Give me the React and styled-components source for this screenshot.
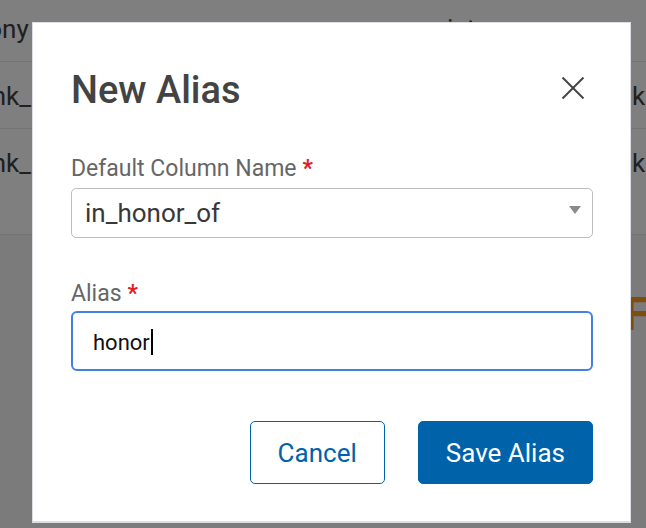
import React from "react";
import styled, { createGlobalStyle } from "styled-components";

const GlobalStyle = createGlobalStyle`
  html, body, #root { margin: 0; padding: 0; height: 100%; }
  body { font-family: Roboto, "Liberation Sans", Arial, sans-serif; overflow: hidden; }
  * { box-sizing: border-box; }
`;

const Page = styled.div`
  position: relative;
  width: 646px;
  height: 528px;
  overflow: hidden;
  background: #ffffff;
`;

const Table = styled.div`
  margin-left: -21px;
  width: 667px;
`;

const Row = styled.div`
  display: grid;
  grid-template-columns: 468px 185px 1fr;
  height: ${(p) => p.$h}px;
  padding-top: ${(p) => p.$pad}px;
  border-bottom: 1px solid #e8e8e8;
  font-size: 26px;
  color: #404040;
  white-space: nowrap;
`;

const Cell = styled.div`
  overflow: hidden;
`;

const Lower = styled.div`
  height: 300px;
  background: #f6f6f6;
  padding: 52px 0 0 624px;
`;

const SectionHeading = styled.div`
  font-size: 46px;
  line-height: 54px;
  font-weight: 700;
  color: #fb9e18;
  white-space: nowrap;
`;

const Overlay = styled.div`
  position: absolute;
  inset: 0;
  background: rgba(0, 0, 0, 0.5);
  padding: 22px 0 0 32px;
`;

const Dialog = styled.div`
  width: 599px;
  height: 501px;
  background: #ffffff;
  border: 1px solid #dcdce2;
  border-bottom-width: 2px;
  padding: 45px 37px 0 38px;
  display: flex;
  flex-direction: column;
`;

const Header = styled.div`
  display: flex;
  justify-content: space-between;
  align-items: center;
  height: 44px;
`;

const Title = styled.h2`
  margin: 0;
  font-size: 38px;
  line-height: 44px;
  font-weight: 500;
  color: #434343;
`;

const CloseButton = styled.button`
  width: 40px;
  height: 40px;
  margin-top: -4px;
  padding: 0;
  border: none;
  background: transparent;
  display: flex;
  align-items: center;
  justify-content: center;
  color: #444;
  cursor: pointer;
`;

const Field = styled.div`
  display: flex;
  flex-direction: column;
  margin-top: ${(p) => p.$top}px;
`;

const Label = styled.label`
  font-size: 23px;
  line-height: 27px;
  color: #666666;
  margin-bottom: ${(p) => p.$gap}px;
`;

const Required = styled.span`
  color: #e0201f;
  font-weight: 700;
  margin-left: 6px;
`;

const SelectBox = styled.div`
  position: relative;
  height: 50px;
  border: 1px solid #bdbdbd;
  border-radius: 5px;
  padding: 0 40px 0 13px;
  font-size: 26px;
  line-height: 48px;
  color: #383838;
`;

const Caret = styled.span`
  position: absolute;
  right: 11px;
  top: 17px;
  width: 0;
  height: 0;
  border-left: 6px solid transparent;
  border-right: 6px solid transparent;
  border-top: 8px solid #8a8a8a;
`;

const TextBox = styled.div`
  height: 60px;
  border: 2px solid #4380e6;
  border-radius: 6px;
  padding: 3px 20px 0 20px;
  display: flex;
  align-items: center;
  font-size: 22px;
  color: #111111;
`;

const TextCursor = styled.span`
  display: inline-block;
  width: 2px;
  height: 26px;
  margin-left: 1px;
  margin-top: -2px;
  background: #000;
`;

const Footer = styled.div`
  display: flex;
  justify-content: flex-end;
  gap: 33px;
  margin-top: 50px;
`;

const Button = styled.button`
  height: 63px;
  padding: 0 27px;
  border-radius: 5px;
  font-family: inherit;
  font-size: 26px;
  border: 1px solid #0062a8;
  background: ${(p) => (p.$primary ? "#0062a8" : "#ffffff")};
  color: ${(p) => (p.$primary ? "#ffffff" : "#0062a8")};
  cursor: pointer;
`;

const rows = [
  { h: 62, pad: 14, a: "tony", b: "ist", c: "" },
  { h: 67, pad: 19, a: "link_url", b: "", c: "kn" },
  { h: 106, pad: 19, a: "link_url", b: "", c: "kn" },
];

export default function App() {
  return (
    <>
      <GlobalStyle />
      <Page>
        <Table>
          {rows.map((r, i) => (
            <Row key={i} $h={r.h} $pad={r.pad}>
              <Cell>{r.a}</Cell>
              <Cell>{r.b}</Cell>
              <Cell>{r.c}</Cell>
            </Row>
          ))}
        </Table>
        <Lower>
          <SectionHeading>Fields</SectionHeading>
        </Lower>
        <Overlay>
          <Dialog role="dialog" aria-labelledby="alias-title">
            <Header>
              <Title id="alias-title">New Alias</Title>
              <CloseButton aria-label="Close">
                <svg width="24" height="24" viewBox="0 0 24 24" fill="none" stroke="currentColor" strokeWidth="2">
                  <line x1="1.5" y1="1.5" x2="22.5" y2="22.5" />
                  <line x1="22.5" y1="1.5" x2="1.5" y2="22.5" />
                </svg>
              </CloseButton>
            </Header>
            <Field $top={43}>
              <Label $gap={6}>
                Default Column Name<Required>*</Required>
              </Label>
              <SelectBox>
                in_honor_of
                <Caret />
              </SelectBox>
            </Field>
            <Field $top={42}>
              <Label $gap={4}>
                Alias<Required>*</Required>
              </Label>
              <TextBox role="textbox">
                honor
                <TextCursor />
              </TextBox>
            </Field>
            <Footer>
              <Button>Cancel</Button>
              <Button $primary>Save Alias</Button>
            </Footer>
          </Dialog>
        </Overlay>
      </Page>
    </>
  );
}
